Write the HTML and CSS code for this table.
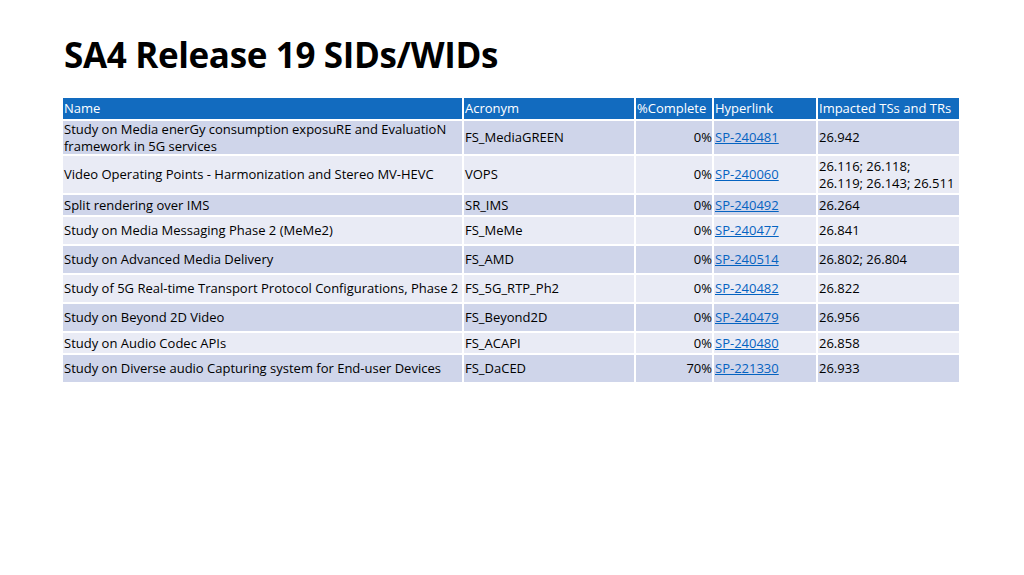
FILE: index.html
```html
<!DOCTYPE html>
<html>
<head>
<meta charset="utf-8">
<link rel="stylesheet" href="styles.css">
</head>
<body>
<div class="slide">
  <h1 class="title">SA4 Release 19 SIDs/WIDs</h1>
  <table class="wids">
    <colgroup>
      <col class="c-name"><col class="c-acr"><col class="c-pct"><col class="c-link"><col class="c-ts">
    </colgroup>
    <thead>
      <tr class="h"><th>Name</th><th>Acronym</th><th>%Complete</th><th>Hyperlink</th><th>Impacted TSs and TRs</th></tr>
    </thead>
    <tbody>
      <tr class="odd r1"><td>Study on Media enerGy consumption exposuRE and EvaluatioN framework in 5G services</td><td>FS_MediaGREEN</td><td class="pct">0%</td><td><a href="#">SP-240481</a></td><td>26.942</td></tr>
      <tr class="even r2"><td>Video Operating Points - Harmonization and Stereo MV-HEVC</td><td>VOPS</td><td class="pct">0%</td><td><a href="#">SP-240060</a></td><td>26.116; 26.118;<br>26.119; 26.143; 26.511</td></tr>
      <tr class="odd r3"><td>Split rendering over IMS</td><td>SR_IMS</td><td class="pct">0%</td><td><a href="#">SP-240492</a></td><td>26.264</td></tr>
      <tr class="even r4"><td>Study on Media Messaging Phase 2 (MeMe2)</td><td>FS_MeMe</td><td class="pct">0%</td><td><a href="#">SP-240477</a></td><td>26.841</td></tr>
      <tr class="odd r4"><td>Study on Advanced Media Delivery</td><td>FS_AMD</td><td class="pct">0%</td><td><a href="#">SP-240514</a></td><td>26.802; 26.804</td></tr>
      <tr class="even r4"><td>Study of 5G Real-time Transport Protocol Configurations, Phase 2</td><td>FS_5G_RTP_Ph2</td><td class="pct">0%</td><td><a href="#">SP-240482</a></td><td>26.822</td></tr>
      <tr class="odd r4"><td>Study on Beyond 2D Video</td><td>FS_Beyond2D</td><td class="pct">0%</td><td><a href="#">SP-240479</a></td><td>26.956</td></tr>
      <tr class="even r3"><td>Study on Audio Codec APIs</td><td>FS_ACAPI</td><td class="pct">0%</td><td><a href="#">SP-240480</a></td><td>26.858</td></tr>
      <tr class="odd r4"><td>Study on Diverse audio Capturing system for End-user Devices</td><td>FS_DaCED</td><td class="pct">70%</td><td><a href="#">SP-221330</a></td><td>26.933</td></tr>
    </tbody>
  </table>
</div>
</body>
</html>
```

FILE: styles.css
```css
html, body {
  margin: 0;
  padding: 0;
  background: #ffffff;
}
.slide {
  width: 1024px;
  height: 575px;
  padding: 33px 0 0 63px;
  box-sizing: border-box;
  font-family: "Open Sans", "Noto Sans", sans-serif;
}
.title {
  margin: 0 0 0 1px;
  font-size: 35px;
  line-height: 44px;
  font-weight: 700;
  color: #000000;
  letter-spacing: -0.35px;
}
.wids {
  margin-top: 21px;
  border-collapse: separate;
  border-spacing: 0;
  width: 896px;
  table-layout: fixed;
  font-size: 13px;
  color: #000000;
}
.c-name { width: 401px; }
.c-acr { width: 172px; }
.c-pct { width: 78px; }
.c-link { width: 104px; }
.c-ts { width: 141px; }
.wids th, .wids td {
  box-sizing: border-box;
  border-right: 2px solid #ffffff;
  border-bottom: 2px solid #ffffff;
  padding: 0 0 0 1px;
  text-align: left;
  vertical-align: middle;
  line-height: 16.5px;
  font-weight: 400;
}
.wids th:last-child, .wids td:last-child { border-right: 0; }
.wids th {
  background: #126BBF;
  color: #ffffff;
}
.h { height: 23px; }
.wids td.pct { text-align: right; padding: 0; }
.odd td { background: #CFD5EA; }
.even td { background: #E9EBF5; }
.r1 { height: 35px; }
.r2 { height: 39px; }
.r3 { height: 22px; }
.r4 { height: 29px; }
.wids a {
  color: #0563C1;
  text-decoration: underline;
}
```
